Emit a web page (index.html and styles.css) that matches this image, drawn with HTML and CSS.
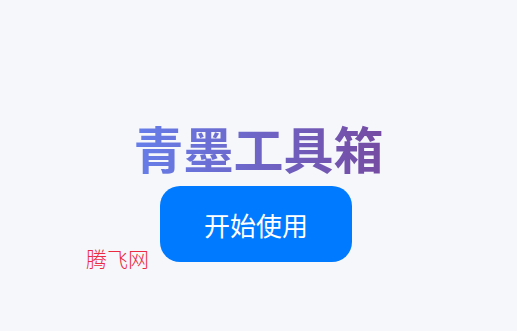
FILE: index.html
```html
<!DOCTYPE html>
<html lang="zh">
<head>
<meta charset="utf-8">
<link rel="stylesheet" href="styles.css">
</head>
<body>
<main class="page">
  <h1 class="title">青墨工具箱</h1>
  <button class="start">开始使用</button>
</main>
<div class="mark">腾飞网</div>
</body>
</html>
```
FILE: styles.css
```css
html, body {
  margin: 0;
  padding: 0;
  height: 100%;
}
body {
  background: #f5f7fb;
  font-family: "Noto Sans CJK SC", "Noto Sans", sans-serif;
  position: relative;
  overflow: hidden;
}
.page {
  display: flex;
  flex-direction: column;
  align-items: center;
  padding-top: 117px;
}
.title {
  margin: 0 0 9px 0;
  font-size: 50px;
  font-weight: 700;
  line-height: 60px;
  background: linear-gradient(90deg, #667eea, #764ba2);
  -webkit-background-clip: text;
  background-clip: text;
  color: transparent;
}
.start {
  width: 192px;
  height: 76px;
  margin-right: 5px;
  border: none;
  border-radius: 20px;
  background: #007bff;
  color: #ffffff;
  font-family: "Noto Sans CJK SC", sans-serif;
  font-size: 26px;
  padding: 0;
}
.mark {
  position: absolute;
  left: 86px;
  top: 243px;
  font-family: "Noto Sans CJK SC", sans-serif;
  font-weight: 300;
  font-size: 21px;
  line-height: 30px;
  color: #ec2a42;
}
```
